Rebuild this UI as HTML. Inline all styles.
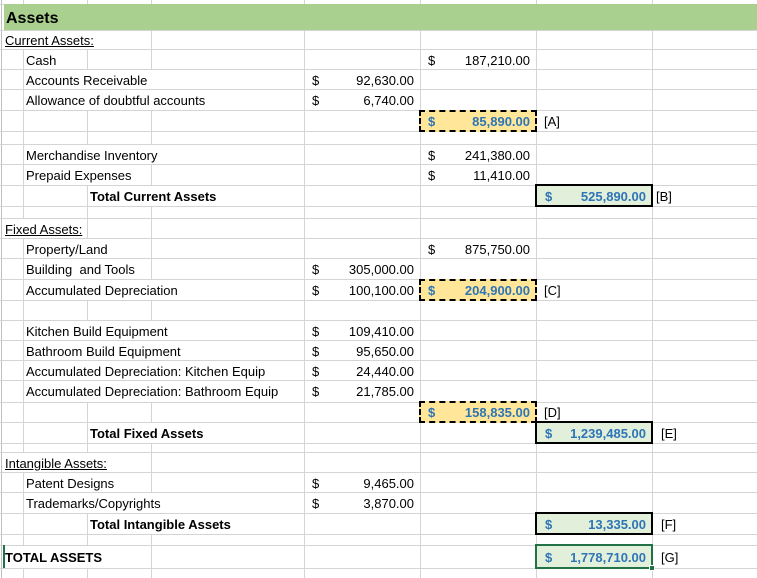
<!DOCTYPE html>
<html><head><meta charset="utf-8"><style>
body{margin:0;width:757px;height:578px;overflow:hidden;background:#fff;position:relative;font-family:"Liberation Sans",Arial,sans-serif;font-size:13px;color:#000}
div{position:absolute;box-sizing:border-box}
.h{left:0;width:757px;height:1px;background:#d4d4d4}
.v{top:0;height:578px;width:1px;background:#d4d4d4}
.m{background:#fff}
.t{line-height:17px;white-space:nowrap;margin-top:1px}
.u{text-decoration:underline}
.b{font-weight:bold}
.bl{color:#2e75b6;font-weight:bold}
.dash{border:2px dashed #000;background:#ffe699}
.grn{border:2px solid #000;background:#e2efda}
</style></head><body>
<div class="v" style="left:1px;background:#bfbfbf"></div>
<div class="v" style="left:23px"></div>
<div class="v" style="left:87px"></div>
<div class="v" style="left:151px"></div>
<div class="v" style="left:304px"></div>
<div class="v" style="left:420px"></div>
<div class="v" style="left:536px"></div>
<div class="v" style="left:652px"></div>
<div class="h" style="top:4px"></div><div class="h" style="top:30px"></div><div class="h" style="top:49px"></div><div class="h" style="top:69px"></div><div class="h" style="top:89px"></div><div class="h" style="top:110px"></div><div class="h" style="top:131px"></div><div class="h" style="top:144px"></div><div class="h" style="top:164px"></div><div class="h" style="top:185px"></div><div class="h" style="top:206px"></div><div class="h" style="top:218px"></div><div class="h" style="top:238px"></div><div class="h" style="top:258px"></div><div class="h" style="top:279px"></div><div class="h" style="top:300px"></div><div class="h" style="top:320px"></div><div class="h" style="top:340px"></div><div class="h" style="top:360px"></div><div class="h" style="top:380px"></div><div class="h" style="top:402px"></div><div class="h" style="top:422px"></div><div class="h" style="top:443px"></div><div class="h" style="top:452px"></div><div class="h" style="top:472px"></div><div class="h" style="top:492px"></div><div class="h" style="top:513px"></div><div class="h" style="top:534px"></div><div class="h" style="top:545px"></div><div class="h" style="top:568px"></div>
<div class="m" style="left:4px;width:147px;top:31px;height:18px"></div>
<div class="m" style="left:24px;width:280px;top:70px;height:19px"></div>
<div class="m" style="left:24px;width:280px;top:90px;height:20px"></div>
<div class="m" style="left:24px;width:280px;top:145px;height:19px"></div>
<div class="m" style="left:24px;width:127px;top:165px;height:20px"></div>
<div class="m" style="left:88px;width:216px;top:186px;height:20px"></div>
<div class="m" style="left:4px;width:83px;top:219px;height:19px"></div>
<div class="m" style="left:24px;width:127px;top:239px;height:19px"></div>
<div class="m" style="left:24px;width:127px;top:259px;height:20px"></div>
<div class="m" style="left:24px;width:280px;top:280px;height:20px"></div>
<div class="m" style="left:24px;width:280px;top:321px;height:19px"></div>
<div class="m" style="left:24px;width:280px;top:341px;height:19px"></div>
<div class="m" style="left:24px;width:280px;top:361px;height:19px"></div>
<div class="m" style="left:24px;width:280px;top:381px;height:21px"></div>
<div class="m" style="left:88px;width:216px;top:423px;height:20px"></div>
<div class="m" style="left:4px;width:147px;top:453px;height:19px"></div>
<div class="m" style="left:24px;width:127px;top:473px;height:19px"></div>
<div class="m" style="left:24px;width:280px;top:493px;height:20px"></div>
<div class="m" style="left:88px;width:216px;top:514px;height:20px"></div>
<div class="m" style="left:4px;width:147px;top:546px;height:22px"></div>
<div style="left:4px;top:4px;width:753px;height:26px;background:#a9d08e"></div>
<div class="t b" style="left:6px;top:8px;font-size:16px;line-height:20px">Assets</div>
<div style="left:3px;top:545px;width:2px;height:23px;background:#217346"></div>
<div class="t u" style="left:5px;top:31px">Current Assets:</div>
<div class="t" style="left:26px;top:51px">Cash</div>
<div class="t" style="left:26px;top:71px">Accounts Receivable</div>
<div class="t" style="left:26px;top:91px">Allowance of doubtful accounts</div>
<div class="t" style="left:26px;top:146px">Merchandise Inventory</div>
<div class="t" style="left:26px;top:166px">Prepaid Expenses</div>
<div class="t b" style="left:90px;top:187px">Total Current Assets</div>
<div class="t u" style="left:5px;top:220px">Fixed Assets:</div>
<div class="t" style="left:26px;top:240px">Property/Land</div>
<div class="t" style="left:26px;top:260px">Building&nbsp; and Tools</div>
<div class="t" style="left:26px;top:281px">Accumulated Depreciation</div>
<div class="t" style="left:26px;top:322px">Kitchen Build Equipment</div>
<div class="t" style="left:26px;top:342px">Bathroom Build Equipment</div>
<div class="t" style="left:26px;top:362px">Accumulated Depreciation: Kitchen Equip</div>
<div class="t" style="left:26px;top:382px">Accumulated Depreciation: Bathroom Equip</div>
<div class="t b" style="left:90px;top:424px">Total Fixed Assets</div>
<div class="t u" style="left:5px;top:454px">Intangible Assets:</div>
<div class="t" style="left:26px;top:474px">Patent Designs</div>
<div class="t" style="left:26px;top:494px">Trademarks/Copyrights</div>
<div class="t b" style="left:90px;top:515px">Total Intangible Assets</div>
<div class="t b" style="left:5px;top:548px">TOTAL ASSETS</div>
<div class="t" style="left:312px;top:71px">$</div><div class="t" style="right:343px;top:71px">92,630.00</div>
<div class="t" style="left:312px;top:91px">$</div><div class="t" style="right:343px;top:91px">6,740.00</div>
<div class="t" style="left:312px;top:260px">$</div><div class="t" style="right:343px;top:260px">305,000.00</div>
<div class="t" style="left:312px;top:281px">$</div><div class="t" style="right:343px;top:281px">100,100.00</div>
<div class="t" style="left:312px;top:322px">$</div><div class="t" style="right:343px;top:322px">109,410.00</div>
<div class="t" style="left:312px;top:342px">$</div><div class="t" style="right:343px;top:342px">95,650.00</div>
<div class="t" style="left:312px;top:362px">$</div><div class="t" style="right:343px;top:362px">24,440.00</div>
<div class="t" style="left:312px;top:382px">$</div><div class="t" style="right:343px;top:382px">21,785.00</div>
<div class="t" style="left:312px;top:474px">$</div><div class="t" style="right:343px;top:474px">9,465.00</div>
<div class="t" style="left:312px;top:494px">$</div><div class="t" style="right:343px;top:494px">3,870.00</div>
<div class="t" style="left:428px;top:51px">$</div><div class="t" style="right:227px;top:51px">187,210.00</div>
<div class="t" style="left:428px;top:146px">$</div><div class="t" style="right:227px;top:146px">241,380.00</div>
<div class="t" style="left:428px;top:166px">$</div><div class="t" style="right:227px;top:166px">11,410.00</div>
<div class="t" style="left:428px;top:240px">$</div><div class="t" style="right:227px;top:240px">875,750.00</div>
<div class="dash" style="left:419px;top:110px;width:118px;height:22px"></div>
<div class="t bl" style="left:428px;top:112px">$</div><div class="t bl" style="right:227px;top:112px">85,890.00</div>
<div class="t" style="left:544px;top:112px">[A]</div>
<div class="dash" style="left:419px;top:279px;width:118px;height:22px"></div>
<div class="t bl" style="left:428px;top:281px">$</div><div class="t bl" style="right:227px;top:281px">204,900.00</div>
<div class="t" style="left:544px;top:281px">[C]</div>
<div class="dash" style="left:419px;top:401px;width:118px;height:22px"></div>
<div class="t bl" style="left:428px;top:403px">$</div><div class="t bl" style="right:227px;top:403px">158,835.00</div>
<div class="t" style="left:544px;top:403px">[D]</div>
<div class="grn" style="left:535px;top:184px;width:118px;height:23px"></div>
<div class="t bl" style="left:545px;top:187px">$</div><div class="t bl" style="right:111px;top:187px">525,890.00</div>
<div class="t" style="left:656px;top:187px">[B]</div>
<div class="grn" style="left:535px;top:421px;width:118px;height:23px"></div>
<div class="t bl" style="left:545px;top:424px">$</div><div class="t bl" style="right:111px;top:424px">1,239,485.00</div>
<div class="t" style="left:661px;top:424px">[E]</div>
<div class="grn" style="left:535px;top:512px;width:118px;height:23px"></div>
<div class="t bl" style="left:545px;top:515px">$</div><div class="t bl" style="right:111px;top:515px">13,335.00</div>
<div class="t" style="left:661px;top:515px">[F]</div>
<div class="grn" style="left:535px;top:544px;width:118px;height:25px;border-color:#217346;background:#e2efda"></div>
<div style="left:649px;top:565px;width:6px;height:6px;background:#217346;border:1px solid #fff"></div>
<div class="t bl" style="left:545px;top:548px">$</div><div class="t bl" style="right:111px;top:548px">1,778,710.00</div>
<div class="t" style="left:661px;top:548px">[G]</div>
</body></html>
